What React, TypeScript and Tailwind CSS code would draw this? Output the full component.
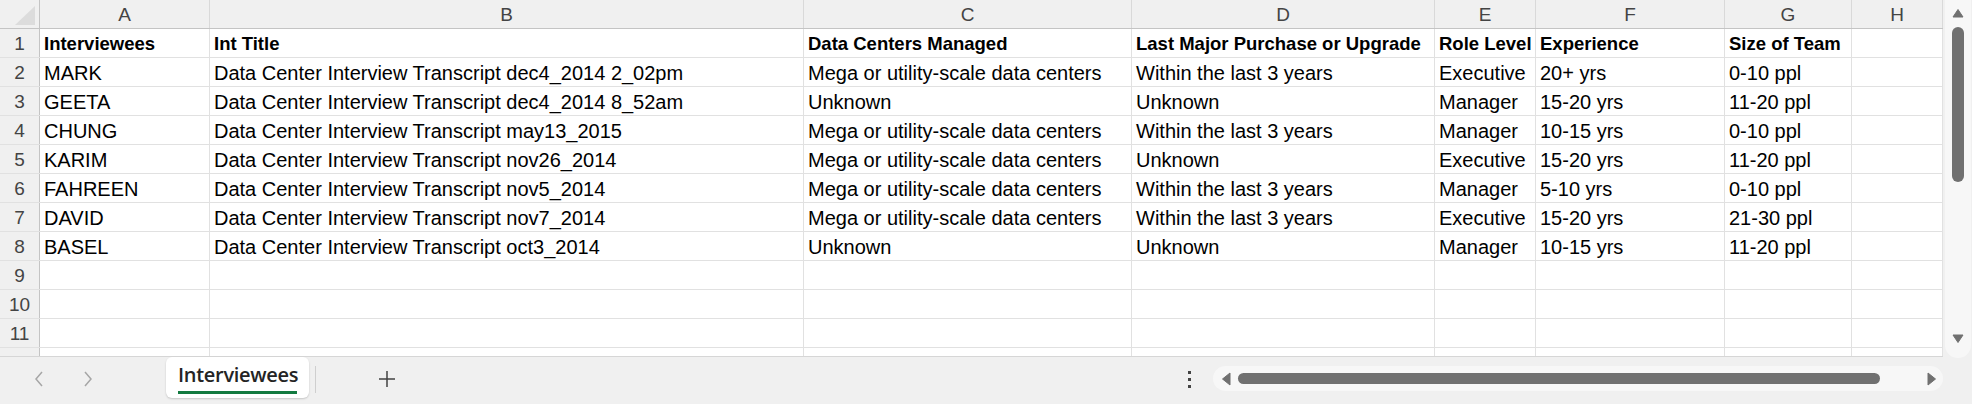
const cols = [
  { key: "A", w: "w-[170px]" },
  { key: "B", w: "w-[594px]" },
  { key: "C", w: "w-[328px]" },
  { key: "D", w: "w-[303px]" },
  { key: "E", w: "w-[101px]" },
  { key: "F", w: "w-[189px]" },
  { key: "G", w: "w-[127px]" },
  { key: "H", w: "w-[91px]" },
];

const T = "Data Center Interview Transcript ";
const MEGA = "Mega or utility-scale data centers";
const WITHIN = "Within the last 3 years";

const rows: string[][] = [
  ["Interviewees", "Int Title", "Data Centers Managed", "Last Major Purchase or Upgrade", "Role Level", "Experience", "Size of Team", ""],
  ["MARK", T + "dec4_2014 2_02pm", MEGA, WITHIN, "Executive", "20+ yrs", "0-10 ppl", ""],
  ["GEETA", T + "dec4_2014 8_52am", "Unknown", "Unknown", "Manager", "15-20 yrs", "11-20 ppl", ""],
  ["CHUNG", T + "may13_2015", MEGA, WITHIN, "Manager", "10-15 yrs", "0-10 ppl", ""],
  ["KARIM", T + "nov26_2014", MEGA, "Unknown", "Executive", "15-20 yrs", "11-20 ppl", ""],
  ["FAHREEN", T + "nov5_2014", MEGA, WITHIN, "Manager", "5-10 yrs", "0-10 ppl", ""],
  ["DAVID", T + "nov7_2014", MEGA, WITHIN, "Executive", "15-20 yrs", "21-30 ppl", ""],
  ["BASEL", T + "oct3_2014", "Unknown", "Unknown", "Manager", "10-15 yrs", "11-20 ppl", ""],
  ["", "", "", "", "", "", "", ""],
  ["", "", "", "", "", "", "", ""],
  ["", "", "", "", "", "", "", ""],
];

function Grid() {
  return (
    <div className="w-[1943px] h-[357px] overflow-hidden bg-white border-b border-[#d6d6d6]">
      {/* column letters */}
      <div className="flex h-[29px] bg-[#f0f0f0] border-b border-[#c4c4c4]">
        <div className="relative w-[40px] shrink-0 border-r border-[#c4c4c4]">
          <div className="absolute left-[15px] top-[6px] w-0 h-0 border-l-[20px] border-l-transparent border-b-[19px] border-b-[#dcdcdc]" />
        </div>
        {cols.map((c) => (
          <div
            key={c.key}
            className={`${c.w} shrink-0 flex items-end justify-center pb-[3px] text-[19px] leading-[20px] text-[#444] border-r border-[#d9d9d9]`}
          >
            {c.key}
          </div>
        ))}
      </div>
      {rows.map((r, i) => (
        <div key={i} className="flex h-[29px] border-b border-[#e1e1e1]">
          <div className="w-[40px] shrink-0 flex items-end justify-center pb-[3px] bg-[#f0f0f0] border-r border-[#c4c4c4] text-[19px] leading-[20px] text-[#444]">
            {i + 1}
          </div>
          {cols.map((c, j) => (
            <div
              key={c.key}
              className={`${c.w} shrink-0 flex items-end overflow-hidden whitespace-nowrap pl-[4px] pb-[3px] leading-[20px] text-black border-r border-[#e1e1e1] ${
                i === 0 ? "font-bold text-[18.5px]" : "text-[20px]"
              }`}
            >
              {r[j]}
            </div>
          ))}
        </div>
      ))}
      {/* partly visible row 12 */}
      <div className="flex h-[29px]">
        <div className="w-[40px] shrink-0 bg-[#f0f0f0] border-r border-[#c4c4c4]" />
        {cols.map((c) => (
          <div key={c.key} className={`${c.w} shrink-0 border-r border-[#e1e1e1]`} />
        ))}
      </div>
    </div>
  );
}

function VScroll() {
  return (
    <div className="w-[29px] h-[357px] bg-[#f0f0f0] pl-[2px]">
      <div className="h-[358px] w-[26px] rounded-b-[13px] bg-[#f7f7f7] flex flex-col items-center pt-[8px]">
        <svg width="12" height="10" viewBox="0 0 12 10">
          <path d="M1 9 L6 1.5 L11 9 Z" fill="#707070" stroke="#707070" strokeLinejoin="round" />
        </svg>
        <div className="mt-[9px] w-[12px] h-[155px] rounded-full bg-[#707070]" />
        <div className="flex-1" />
        <svg width="12" height="10" viewBox="0 0 12 10" className="mb-[14px]">
          <path d="M1 1 L6 8.5 L11 1 Z" fill="#707070" stroke="#707070" strokeLinejoin="round" />
        </svg>
      </div>
    </div>
  );
}

function BottomBar() {
  return (
    <div className="flex h-[47px] bg-[#f0f0f0]">
      <div className="flex items-center w-[166px] h-[44px]">
        <svg width="10" height="18" viewBox="0 0 10 18" className="ml-[34px]">
          <path d="M8 2 L2 9 L8 16" fill="none" stroke="#a6a6a6" strokeWidth="1.5" />
        </svg>
        <svg width="10" height="18" viewBox="0 0 10 18" className="ml-[39px]">
          <path d="M2 2 L8 9 L2 16" fill="none" stroke="#a6a6a6" strokeWidth="1.5" />
        </svg>
      </div>
      <div className="w-[143px] h-[41px] bg-white rounded-[6px] shadow-[0_1px_2px_rgba(0,0,0,0.18)] pl-[12px] pt-[6px]">
        <div className="text-[20px] leading-[24px] font-semibold text-[#242424] font-['Open_Sans','Liberation_Sans',sans-serif] tracking-[-0.3px]">
          Interviewees
        </div>
        <div className="mt-[4px] w-[119px] h-[3px] bg-[#137a40]" />
      </div>
      <div className="ml-[6px] mt-[9px] w-px h-[27px] bg-[#cfcfcf]" />
      <div className="ml-[62px] h-[44px] flex items-center">
        <svg width="18" height="18" viewBox="0 0 18 18">
          <path d="M9 1 V17 M1 9 H17" stroke="#424242" strokeWidth="1.5" />
        </svg>
      </div>
      <div className="flex-1" />
      <div className="h-[44px] flex flex-col items-center justify-center gap-[4px] mr-[22px] pt-[1px]">
        <div className="w-[3px] h-[3px] bg-[#444]" />
        <div className="w-[3px] h-[3px] bg-[#444]" />
        <div className="w-[3px] h-[3px] bg-[#444]" />
      </div>
      <div className="mt-[9px] w-[730px] h-[25px] rounded-full bg-[#f7f7f7] flex items-center pl-[8px] pr-[6px]">
        <svg width="10" height="14" viewBox="0 0 10 14">
          <path d="M9 1 L1.5 7 L9 13 Z" fill="#707070" stroke="#707070" strokeLinejoin="round" />
        </svg>
        <div className="ml-[7px] w-[642px] h-[11px] rounded-full bg-[#707070]" />
        <div className="flex-1" />
        <svg width="10" height="14" viewBox="0 0 10 14">
          <path d="M1 1 L8.5 7 L1 13 Z" fill="#707070" stroke="#707070" strokeLinejoin="round" />
        </svg>
      </div>
      <div className="w-[29px]" />
    </div>
  );
}

export default function App() {
  return (
    <div className="w-[1972px] h-[404px] overflow-hidden bg-[#f0f0f0] font-['Liberation_Sans',Arial,sans-serif]">
      <div className="flex">
        <Grid />
        <VScroll />
      </div>
      <BottomBar />
    </div>
  );
}
